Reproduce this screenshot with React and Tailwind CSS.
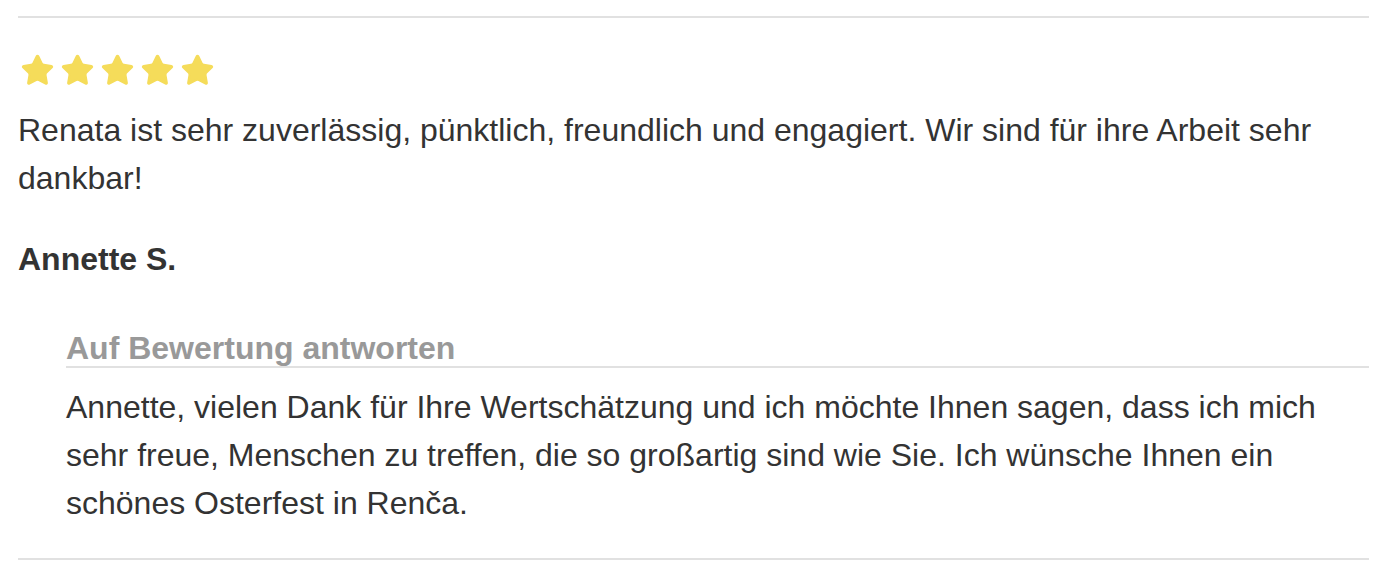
import { Star } from 'lucide-react';

export default function App() {
    return (
        <div className="bg-white w-[1387px] h-[580px] px-[18px] pt-4 text-[#333] font-['Liberation_Sans',Arial,sans-serif]">
            <div className="border-t-2 border-[#e1e1e1]">
                {/* Rating */}
                <div className="flex gap-[5px] pl-[2px] pt-[35px]">
                    {[0, 1, 2, 3, 4].map(i => (
                        <Star key={i} size={35} className="text-[#f5dc5a]" fill="#f5dc5a" strokeWidth={1.5} />
                    ))}
                </div>
                <p className="text-[32px] leading-[48px] mt-[18px]">
                    Renata ist sehr zuverlässig, pünktlich, freundlich und engagiert. Wir sind für ihre Arbeit sehr dankbar!
                </p>
                <p className="text-[32px] leading-[48px] font-bold mt-[33px]">Annette S.</p>

                {/* Reply */}
                <div className="ml-[48px] mt-[47px]">
                    <h4 className="text-[32px] leading-[36px] font-bold text-[#999] border-b-2 border-[#e1e1e1]">Auf Bewertung antworten</h4>
                    <p className="text-[32px] leading-[48px] mt-[15px]">
                        Annette, vielen Dank für Ihre Wertschätzung und ich möchte Ihnen sagen, dass ich mich sehr freue, Menschen zu treffen, die so großartig sind wie Sie. Ich wünsche Ihnen ein schönes Osterfest in Renča.
                    </p>
                </div>
                <div className="border-t-2 border-[#e1e1e1] mt-[31px]" />
            </div>
        </div>
    );
}
